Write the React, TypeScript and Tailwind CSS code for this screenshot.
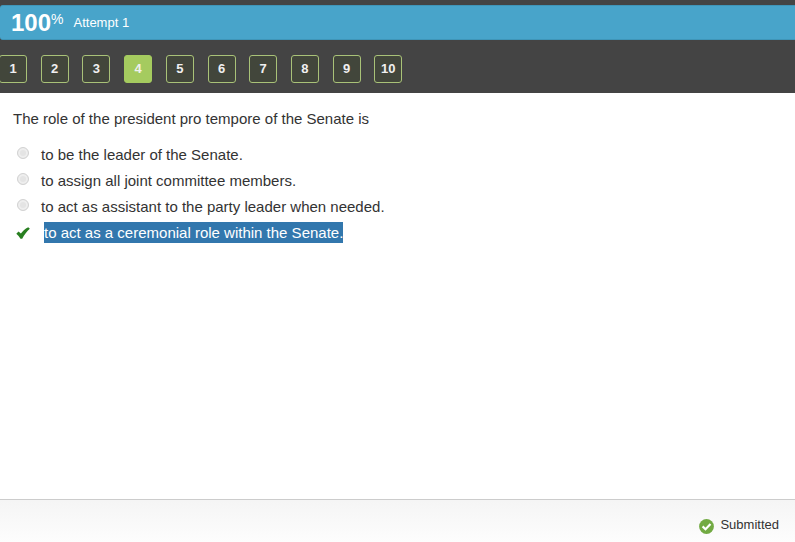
import { useState } from 'react';
import { clsx } from 'clsx';

const QUESTIONS = [1, 2, 3, 4, 5, 6, 7, 8, 9, 10];

const ANSWERS = [
  { id: 'a', text: 'to be the leader of the Senate.' },
  { id: 'b', text: 'to assign all joint committee members.' },
  { id: 'c', text: 'to act as assistant to the party leader when needed.' },
  { id: 'd', text: 'to act as a ceremonial role within the Senate.', correct: true },
];

function CheckMark() {
  return (
    <svg viewBox="0 0 14 12" className="h-3 w-3.5" role="img" aria-label="Correct">
      <path
        d="M0.3 6.7 2.5 4.5 4.9 6.6C6.8 3.8 9 1.6 12.2 0.2L13.9 1.8C10.8 4.4 8.4 7.6 6.2 11.7H4.5C3.3 9.8 2 8.2 0.3 6.7Z"
        fill="#287f20"
      />
    </svg>
  );
}

function SubmittedIcon() {
  return (
    <svg viewBox="0 0 15 15" className="size-[15px]" aria-hidden="true">
      <circle cx="7.5" cy="7.5" r="7.4" fill="#72aa43" />
      <path d="M3.6 7.4 6.5 10.2 11.5 5" fill="none" stroke="#fff" strokeWidth="2.2" />
    </svg>
  );
}

function QuestionNav({ current, onSelect }: { current: number; onSelect: (n: number) => void }) {
  return (
    <nav aria-label="Questions" className="-ml-px grid w-[417px] grid-cols-10 pt-[15px] pb-2.5">
      {QUESTIONS.map((n) => (
        <button
          key={n}
          type="button"
          onClick={() => onSelect(n)}
          aria-current={n === current ? 'step' : undefined}
          className={clsx(
            'size-7 rounded-[3px] border pb-0.5 text-[13px] leading-none font-bold text-[#f0f0f0]',
            n === current ? 'border-[#a5cb5f] bg-[#a5cb5f]' : 'border-[#a9c278] bg-[#42463b]',
          )}
        >
          {n}
        </button>
      ))}
    </nav>
  );
}

export default function App() {
  const [current, setCurrent] = useState(4);

  return (
    <div className="flex min-h-screen flex-col overflow-x-hidden bg-white font-['Liberation_Sans',Arial,sans-serif] text-[15px] text-[#333]">
      <header className="bg-[#444] pt-[5px]">
        <div className="flex h-[35px] items-center gap-2.5 rounded-l-[3px] border-y border-[#3f95b8] bg-[#48a4ca] pl-[11px] text-white">
          <div className="flex items-start leading-6 font-bold">
            <span className="text-2xl leading-6">100</span>
            <span className="text-sm leading-4 font-normal">%</span>
          </div>
          <span className="text-[13px]">Attempt 1</span>
        </div>
        <QuestionNav current={current} onSelect={setCurrent} />
      </header>

      <main className="flex-1 px-[13px] pt-4">
        <fieldset>
          <legend className="leading-5">The role of the president pro tempore of the Senate is</legend>
          <ul className="mt-[13px]">
            {ANSWERS.map((answer) => (
              <li key={answer.id} className="flex h-[26px] items-center">
                {answer.correct ? (
                  <>
                    <span className="flex w-[31px] pl-[3px]">
                      <CheckMark />
                    </span>
                    <span className="mb-px bg-[#3277ad] leading-[21px] text-white">{answer.text}</span>
                  </>
                ) : (
                  <>
                    <span className="flex w-7 pb-1 pl-1">
                      <input
                        id={answer.id}
                        type="radio"
                        name="answer"
                        disabled
                        className="size-3 appearance-none rounded-full border border-[#d2d2d2] bg-[#e4e4e4] inset-ring-2 inset-ring-[#eee]"
                      />
                    </span>
                    <label htmlFor={answer.id}>{answer.text}</label>
                  </>
                )}
              </li>
            ))}
          </ul>
        </fieldset>
      </main>

      <footer className="flex h-[43px] items-center justify-end gap-1.5 border-t border-[#ccc] bg-linear-to-b from-[#f5f5f5] to-[#fdfdfd] px-4 pt-2.5">
        <SubmittedIcon />
        <span className="pb-0.5 text-[13px] leading-4">Submitted</span>
      </footer>
    </div>
  );
}
